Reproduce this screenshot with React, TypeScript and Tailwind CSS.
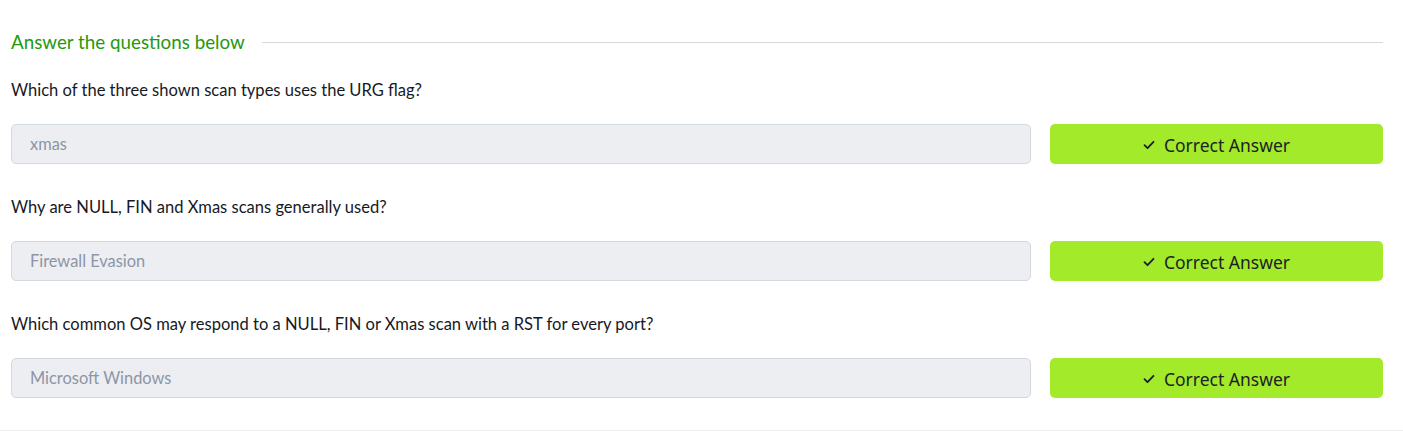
import React from "react";

const items = [
  { q: "Which of the three shown scan types uses the URG flag?", a: "xmas" },
  { q: "Why are NULL, FIN and Xmas scans generally used?", a: "Firewall Evasion" },
  {
    q: "Which common OS may respond to a NULL, FIN or Xmas scan with a RST for every port?",
    a: "Microsoft Windows",
  },
];

function Check() {
  return (
    <svg width="12" height="10" viewBox="0 0 12 10" fill="none">
      <path d="M1.5 5.2 L4.5 8.2 L10.5 1.8" stroke="#1c1f26" strokeWidth="1.8" strokeLinecap="round" strokeLinejoin="round" />
    </svg>
  );
}

export default function App() {
  return (
    <div className="w-[1403px] h-[432px] bg-white overflow-hidden" style={{ fontFamily: '"Source Sans Pro", Lato, "Noto Sans", sans-serif' }}>
      <div className="h-[431px] border-b border-[#eef0f3] pl-[11px] pr-[20px] pt-[30px]">
        <div className="flex items-center gap-[17px] h-[24px]">
          <span className="text-[18.8px] text-[#1f9a0f] whitespace-nowrap leading-[24px]">Answer the questions below</span>
          <div className="flex-1 h-px bg-[#d6d9de]" />
        </div>
        <div className="flex flex-col gap-[31px] mt-[24px]">
          {items.map((it, i) => (
            <div key={i} className="flex flex-col">
              <div className="text-[16.55px] text-[#161925] leading-[24px] h-[24px]">{it.q}</div>
              <div className="flex gap-[19px] mt-[22px]">
                <div className="flex-1 h-[40px] rounded-[5px] border border-[#d3d7de] bg-[#eceef2] flex items-center pl-[18px] text-[16.4px] text-[#8d95a6]">
                  {it.a}
                </div>
                <div
                  className="w-[333px] h-[40px] rounded-[5px] bg-[#a3ea2a] flex items-center justify-center gap-[9px] pt-[2px] text-[17.5px] text-[#1c1f26]"
                  style={{ fontFamily: '"Noto Sans", "Open Sans", sans-serif' }}
                >
                  <Check />
                  <span>Correct Answer</span>
                </div>
              </div>
            </div>
          ))}
        </div>
      </div>
    </div>
  );
}
